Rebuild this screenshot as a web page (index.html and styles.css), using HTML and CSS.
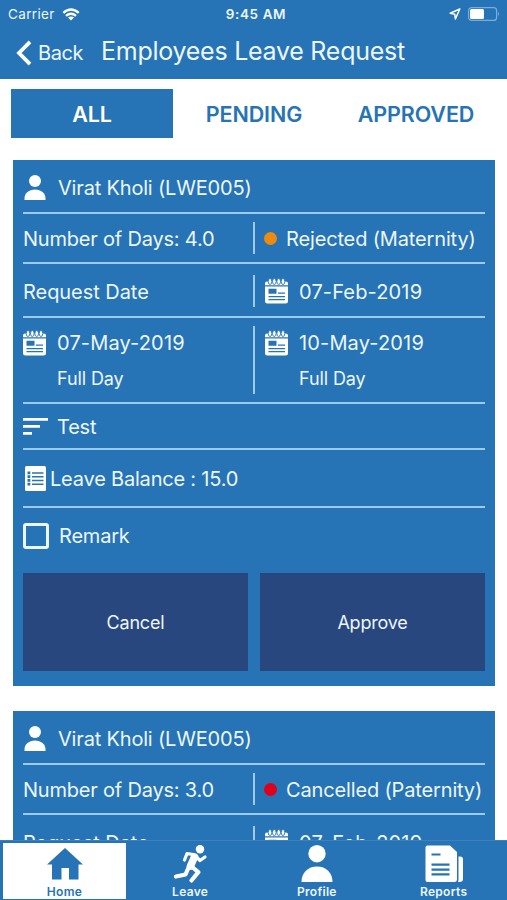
FILE: index.html
```html
<!DOCTYPE html>
<html lang="en">
<head>
<meta charset="utf-8">
<title>Employees Leave Request</title>
<link rel="stylesheet" href="styles.css">
</head>
<body>
<svg class="defs" aria-hidden="true">
  <symbol id="person" viewBox="0 0 22 25"><circle cx="11" cy="6" r="6"/><path d="M.5 25v-1.500C.5 18 5 14.500 11 14.500S21.500 18 21.500 23.500V25z"/></symbol>
  <symbol id="calendar" viewBox="0 0 23 26">
    <path d="M0 7.300V5.500Q0 3.500 2 3.500h19q2 0 2 2v1.800zM0 8.500h23v14.500q0 2.500-2.500 2.500h-18Q0 25.500 0 23z"/>
    <g class="rings"><ellipse cx="5" cy="3.500" rx="1.800" ry="3"/><ellipse cx="9.300" cy="3.500" rx="1.800" ry="3"/><ellipse cx="13.700" cy="3.500" rx="1.800" ry="3"/><ellipse cx="18" cy="3.500" rx="1.800" ry="3"/></g>
    <g class="cut"><path d="M3.500 10.800h8v5h-8zM13 14.500h7v1.300h-7zM3.500 18h16.500v1.300H3.500zM3.500 21h16.500v1.300H3.500z"/></g>
  </symbol>
</svg>
<div class="screen">
  <header class="header">
    <div class="status">
      <span class="carrier">Carrier
        <svg class="wifi" viewBox="0 0 18 13"><path d="M1.300 4.800Q9-2 16.700 4.800M4 7.800q5-4.200 10 0" fill="none" stroke="currentColor" stroke-width="2.400"/><path d="M9 12.500 6 9.600q3-2.200 6 0z" fill="currentColor"/></svg>
      </span>
      <span class="clock">9:45 AM</span>
      <span class="indicators">
        <svg class="location" viewBox="0 0 12 12"><path d="M10.800 1 1.200 5.300l4.600.9.600 4.700z" fill="none" stroke="currentColor" stroke-width="1.500" stroke-linejoin="round"/></svg>
        <svg class="battery" viewBox="0 0 32 14"><rect x=".6" y=".6" width="28" height="12.800" rx="3" fill="none" stroke="#79addb" stroke-width="1.200"/><rect x="2" y="2" width="14" height="10" rx="1.500" fill="#fff"/><path d="M30 4.800q2 2.200 0 4.400z" fill="#79addb"/></svg>
      </span>
    </div>
    <div class="titlebar">
      <svg class="chevron" viewBox="0 0 16 26"><path d="M14 1.800 3 13l11 11.200" fill="none" stroke="currentColor" stroke-width="3.800"/></svg>
      <span class="back">Back</span>
      <h1 class="title">Employees Leave Request</h1>
    </div>
  </header>
  <nav class="tabs">
    <span class="tab active">ALL</span>
    <span class="tab">PENDING</span>
    <span class="tab">APPROVED</span>
  </nav>
  <main class="list">
    <article class="card">
      <div class="row name-row"><svg class="person"><use href="#person"/></svg><span class="name">Virat Kholi (LWE005)</span></div>
      <div class="row days-row">
        <div class="cell"><span class="days">Number of Days: 4.0</span></div>
        <div class="cell split"><i class="dot rejected"></i><span class="state">Rejected (Maternity)</span></div>
      </div>
      <div class="row request-row">
        <div class="cell"><span class="request">Request Date</span></div>
        <div class="cell split"><svg class="calendar"><use href="#calendar"/></svg><span class="date">07-Feb-2019</span></div>
      </div>
      <div class="row range-row">
        <div class="cell range"><svg class="calendar"><use href="#calendar"/></svg><span class="date">07-May-2019</span><span class="duration">Full Day</span></div>
        <div class="cell range split"><svg class="calendar"><use href="#calendar"/></svg><span class="date">10-May-2019</span><span class="duration">Full Day</span></div>
      </div>
      <div class="row reason-row"><svg class="lines" viewBox="0 0 25 17"><path d="M0 0h25v2.800H0zM0 7h17v2.800H0zM0 14h9v2.800H0z"/></svg><span class="reason">Test</span></div>
      <div class="row balance-row"><svg class="sheet" viewBox="0 0 21 25"><rect width="21" height="25" rx="1.500"/><path class="cut" d="M2.500 5.500h2.800v2.800H2.500zM2.500 9.200h2.800V12H2.500zM2.500 13h2.800v2.800H2.500zM2.500 16.800h2.800v2.800H2.500zM7 6.300h11.500v1.500H7zM7 10h11.500v1.500H7zM7 13.800h11.500v1.500H7zM7 17.500h11.500V19H7z"/></svg><span class="balance">Leave Balance : 15.0</span></div>
      <div class="remark-row"><i class="checkbox"></i><span class="remark">Remark</span></div>
      <div class="actions"><button class="action">Cancel</button><button class="action">Approve</button></div>
    </article>
    <article class="card">
      <div class="row name-row"><svg class="person"><use href="#person"/></svg><span class="name">Virat Kholi (LWE005)</span></div>
      <div class="row days-row">
        <div class="cell"><span class="days">Number of Days: 3.0</span></div>
        <div class="cell split"><i class="dot cancelled"></i><span class="state">Cancelled (Paternity)</span></div>
      </div>
      <div class="row request-row">
        <div class="cell"><span class="request">Request Date</span></div>
        <div class="cell split"><svg class="calendar"><use href="#calendar"/></svg><span class="date">07-Feb-2019</span></div>
      </div>
    </article>
  </main>
  <footer class="bottom-nav">
    <a class="nav-item current"><svg class="nav-icon" viewBox="0 0 38 38"><path d="M19 3 37 19.500h-4.500V34.500H23V23h-7.500v11.500H6V19.500H1z"/></svg><span>Home</span></a>
    <a class="nav-item"><svg class="nav-icon" viewBox="0 0 38 38"><circle cx="29" cy="4.200" r="4.200"/><g fill="none" stroke="currentColor" stroke-linecap="round" stroke-linejoin="round"><path d="M23.500 12 19.500 21" stroke-width="7.500"/><path d="m22.500 9.500-6.500-.8-2.500 6.300" stroke-width="3.200"/><path d="m25.500 12 3.500 3.500 5-3.500" stroke-width="3.200"/><path d="M18 21.500 14.500 29.500 5 31.500M20.500 21.500l6.800 5.700-6.800 8.300" stroke-width="4.200"/></g></svg><span>Leave</span></a>
    <a class="nav-item"><svg class="nav-icon" viewBox="0 0 38 38"><circle cx="19" cy="8.700" r="8.700"/><path d="M3.500 37C3.500 27.500 10 21.500 19 21.500S34.500 27.500 34.500 37z"/></svg><span>Profile</span></a>
    <a class="nav-item"><svg class="nav-icon" viewBox="0 0 38 38"><path d="M2.500.5H25L32 7v27q0 3-2.500 3h-27Q.5 37 .5 35V2.500q0-2 2-2zM33.500 11.500h1.800q2.700 0 2.700 2.500v20q0 3-3.500 3H33q.5-1 .5-3z"/><path class="cut" d="M6.500 8.500h9v2h-9zM6.500 18.500h18v2.200h-18zM6.500 23.500h18v2.200h-18zM6.500 28.300h18v2.200h-18z"/></svg><span>Reports</span></a>
  </footer>
</div>
</body>
</html>
```
FILE: styles.css
```css
* { box-sizing: border-box; }
body { margin: 0; font-family: Inter, "Liberation Sans", sans-serif; font-size: 20px; color: #edf6ff; background: #fff; }
svg { display: block; flex: none; fill: currentColor; color: #fff; }
.defs { position: absolute; width: 0; height: 0; }
.cut { fill: #2674b5; }
.rings { fill: #fff; stroke: #2674b5; stroke-width: .9; }
.screen { height: 900px; display: flex; flex-direction: column; overflow: hidden; }
span, h1 { white-space: nowrap; }

.header { flex: none; height: 79px; background: #2674b5; }
.status { height: 28px; padding: 0 7px 0 8px; display: grid; grid-template-columns: 1fr auto 1fr; align-items: center; font-size: 13.500px; line-height: 28px; }
.carrier { display: flex; gap: 7px; align-items: center; letter-spacing: .35px; }
.wifi { width: 18px; height: 13px; }
.clock { font-weight: 600; letter-spacing: .6px; padding-left: 4px; }
.indicators { display: flex; justify-content: flex-end; align-items: center; gap: 7px; }
.location { width: 12px; height: 12px; }
.battery { width: 32px; height: 14px; }
.titlebar { display: flex; align-items: center; height: 49px; padding-left: 16px; }
.chevron { width: 16px; height: 26px; }
.back { margin-left: 6px; width: 63px; letter-spacing: -.4px; }
.title { margin: 0; font-size: 25px; font-weight: 400; letter-spacing: -.26px; line-height: 30px; padding-bottom: 3px; }

.tabs { flex: none; display: grid; grid-template-columns: repeat(3, 162px); margin: 10px 0 0 11px; height: 49px; }
.tab { display: flex; align-items: center; justify-content: center; font-size: 21.500px; font-weight: 600; letter-spacing: -.1px; color: #2674b5; }
.tab.active { background: #2674b5; color: #fff; }

.list { flex: 1; min-height: 0; overflow: hidden; padding: 22px 12px 0 13px; }
.card { background: #2674b5; padding: 0 10px; height: 526px; margin-bottom: 25px; }
.row { display: flex; align-items: center; border-bottom: 2px solid #9dcbf0; }
.row span { padding-top: 1px; }
.name-row { height: 54px; padding-top: 3px; }
.name { letter-spacing: -.18px; }
.person { width: 22px; height: 25px; margin: 0 12px 0 1px; }
.days-row { height: 50px; }
.days { letter-spacing: -.2px; }
.request-row { height: 54px; padding-top: 2px; }
.request { letter-spacing: -.05px; }
.range-row { height: 86px; }
.reason-row { height: 46px; }
.reason { letter-spacing: -.2px; }
.balance-row { height: 58px; }
.balance { letter-spacing: -.2px; }
.remark-row { height: 56px; display: flex; align-items: center; }
.remark { letter-spacing: -.2px; }
.cell { flex: none; width: 230px; height: 32px; display: flex; align-items: center; }
.split { width: 232px; border-left: 2px solid #9dcbf0; padding-left: 10px; }
.dot { flex: none; width: 13px; height: 13px; border-radius: 50%; margin: 0 9px 0 -1px; }
.state { letter-spacing: -.15px; }
.rejected { background: #ee8a0c; }
.cancelled { background: #e0001b; }
.calendar { width: 23px; height: 26px; margin-right: 11px; }
.date { letter-spacing: .15px; }
.range { height: 68px; display: grid; grid-template-columns: 34px 1fr; grid-template-rows: 34px 1fr; align-items: center; }
.row .date { padding-top: 1px; }
.range .date { padding-top: 0; }
.row .duration { grid-column: 2; font-size: 18px; letter-spacing: -.1px; padding-top: 3px; }
.lines { width: 25px; height: 17px; margin-right: 9px; }
.sheet { width: 21px; height: 25px; margin: 0 4px 0 2px; }
.checkbox { width: 26px; height: 26px; border: 3px solid #edf6ff; border-radius: 3px; margin-right: 10px; }
.actions { display: grid; grid-template-columns: 225px 225px; gap: 12px; margin-top: 9px; }
.action { height: 98px; border: 0; padding: 0; background: #28477f; color: #edf6ff; font: 18px Inter, "Liberation Sans", sans-serif; letter-spacing: -.2px; }

.bottom-nav { flex: none; height: 60px; display: grid; grid-template-columns: repeat(4, 1fr); background: #2674b5; border-top: 1px solid #3b82bd; font-size: 12px; font-weight: 600; }
.nav-item { display: flex; flex-direction: column; align-items: center; padding-top: 4px; letter-spacing: .3px; line-height: 14px; }
.nav-icon { width: 38px; height: 38px; margin-bottom: 2px; }
.current { background: #fff; color: #2674b5; margin: 2px 0 2px 3px; width: 123px; padding-top: 2px; }
.current .nav-icon { color: #2674b5; }
```
